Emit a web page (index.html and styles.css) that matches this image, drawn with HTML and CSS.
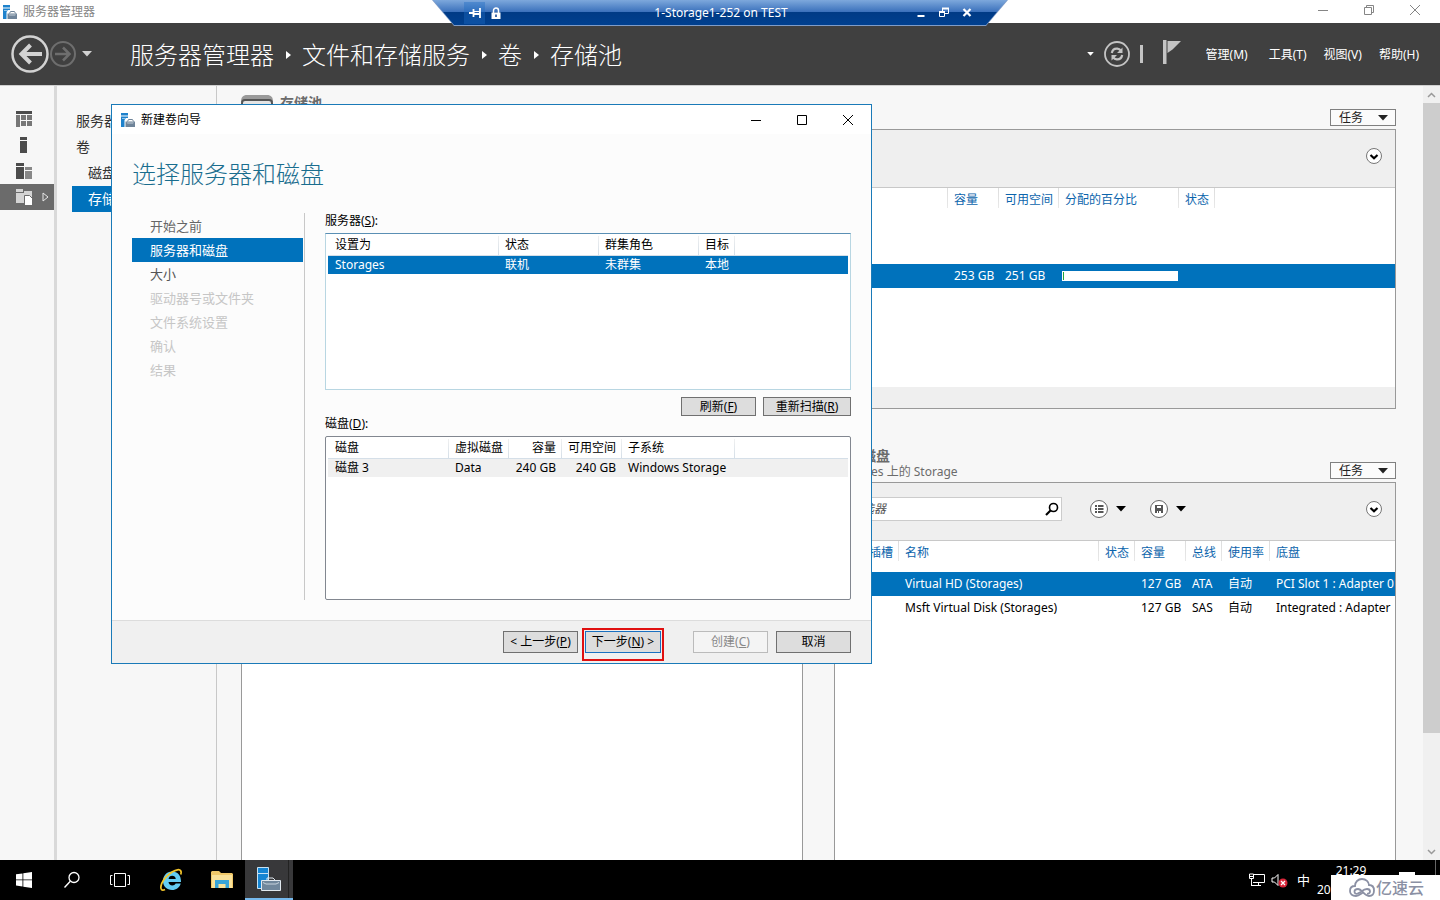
FILE: index.html
```html
<!DOCTYPE html>
<html lang="zh-CN">
<head>
<meta charset="utf-8">
<title>服务器管理器</title>
<link rel="stylesheet" href="styles.css">
</head>
<body>
<svg class="defs" width="0" height="0" aria-hidden="true">
  <symbol id="i-server" viewBox="0 0 14 14">
    <path fill="#1e82cc" d="M0 0h7v2.500H0zM0 3.500h7V5H5L3.500 7v7H0z"/>
    <path fill="#8fc4ea" d="M1 5h4v1H1z"/>
    <path fill="none" stroke="#6f8499" d="M6.500 8.500l1-2h4l1 2"/>
    <path fill="#6f8499" d="M4.500 8.500h9.500V14H4.500z"/>
    <path fill="#c3ced8" d="M5.500 9.500h7.500l-1 1H6.500z"/>
  </symbol>
  <symbol id="i-chev" viewBox="0 0 18 18">
    <circle cx="9" cy="9" r="7.500" fill="#fff" stroke="#777"/>
    <path d="M5.500 8L9 11.200 12.500 8" fill="none" stroke="#000" stroke-width="2.200"/>
  </symbol>
  <symbol id="i-caret" viewBox="0 0 10 6"><path d="M0 0h10L5 5.500z" fill="currentColor"/></symbol>
  <symbol id="i-min" viewBox="0 0 12 12"><path d="M1 6.500h10" stroke="currentColor" fill="none"/></symbol>
  <symbol id="i-close" viewBox="0 0 12 12"><path d="M1 1l10 10M11 1L1 11" stroke="currentColor" fill="none"/></symbol>
  <symbol id="i-restore" viewBox="0 0 12 12"><path d="M1.500 3.500h7v7h-7zM3.500 3.500v-2h7v7h-2" stroke="currentColor" fill="none"/></symbol>
</svg>

<div class="screen">
  <header class="titlebar">
    <svg class="app-icon" width="14" height="14"><use href="#i-server"/></svg>
    <span class="app-title">服务器管理器</span>
    <div class="win-controls">
      <button aria-label="最小化"><svg width="12" height="12"><use href="#i-min"/></svg></button>
      <button aria-label="还原"><svg width="12" height="12"><use href="#i-restore"/></svg></button>
      <button aria-label="关闭"><svg width="12" height="12"><use href="#i-close"/></svg></button>
    </div>
  </header>

  <div class="remote-bar">
    <div class="remote-inner">
      <div class="remote-left">
        <button class="pin" aria-label="固定"><svg width="12" height="12" viewBox="0 0 12 12"><path d="M0 6h4M4.500 2v8M11 1v10" stroke="#fff" stroke-width="1.800" fill="none"/><path d="M5 4h6v4H5z" fill="#fff"/><path d="M5.500 5.500H10" stroke="#2a63b0"/></svg></button>
        <button aria-label="锁定"><svg width="10" height="12" viewBox="0 0 10 12"><path d="M2.500 6V3.500a2.500 2.500 0 0 1 5 0V6" fill="none" stroke="#fff" stroke-width="1.500"/><path d="M.5 5.500h9V12h-9z" fill="#fff"/><path d="M5 7.500v2.500" stroke="#0a3f90" stroke-width="1.500"/></svg></button>
      </div>
      <span class="remote-title">1-Storage1-252 on TEST</span>
      <div class="remote-right">
        <button aria-label="最小化"><svg width="12" height="12" viewBox="0 0 12 12"><path d="M2.500 9h7" stroke="#fff" stroke-width="2"/></svg></button>
        <button aria-label="还原"><svg width="12" height="12" viewBox="0 0 12 12"><path d="M1.500 5.500h5v4h-5zM4.500 5V1.500h6v5H7" fill="none" stroke="#fff"/><path d="M1 5h6M4 1.500h7" stroke="#fff" stroke-width="2"/></svg></button>
        <button aria-label="关闭"><svg width="12" height="12" viewBox="0 0 12 12"><path d="M2.500 2l7 7M9.500 2l-7 7" stroke="#fff" stroke-width="2.200"/></svg></button>
      </div>
    </div>
  </div>

  <nav class="navbar">
    <div class="history">
      <button aria-label="后退"><svg width="38" height="38" viewBox="0 0 38 38"><circle cx="19" cy="19" r="17.500" fill="none" stroke="#d2d2d2" stroke-width="2.500"/><path d="M31 19H11M19.500 10l-9 9 9 9" fill="none" stroke="#d2d2d2" stroke-width="4"/></svg></button>
      <button aria-label="前进"><svg width="28" height="28" viewBox="0 0 28 28"><circle cx="14" cy="14" r="12" fill="none" stroke="#6e6e6e" stroke-width="2"/><path d="M6 14h14M14 7.500l6.500 6.500-6.500 6.500" fill="none" stroke="#6e6e6e" stroke-width="2.500"/></svg></button>
      <button class="drop" aria-label="历史"><svg width="10" height="6"><use href="#i-caret"/></svg></button>
    </div>
    <div class="crumbs">
      <a href="#">服务器管理器</a><i></i><a href="#">文件和存储服务</a><i></i><a href="#">卷</a><i></i><a href="#">存储池</a>
    </div>
    <div class="nav-tools">
      <button aria-label="更多"><svg width="7" height="4"><use href="#i-caret"/></svg></button>
      <button aria-label="刷新"><svg width="28" height="28" viewBox="0 0 28 28"><circle cx="14" cy="14" r="12" fill="none" stroke="#c4c4c4" stroke-width="1.800"/><path d="M8.800 13c.6-3 3-4.500 5.500-4.300 1.600.1 2.700.8 3.700 2M19.200 15c-.6 3-3 4.500-5.500 4.300-1.600-.1-2.700-.8-3.700-2" fill="none" stroke="#c4c4c4" stroke-width="2.200"/><path d="M19.500 7.500v5.500H14zM8.500 20.500V15H14z" fill="#c4c4c4"/></svg></button>
      <span class="vbar"></span>
      <button class="flag" aria-label="通知"><svg width="18" height="24" viewBox="0 0 18 24"><path d="M0 0h3.500v24H0zM4.500 1H18L9.500 9.500 4.500 13z" fill="#c4c4c4"/></svg></button>
    </div>
    <div class="menus">
      <button>管理(M)</button><button>工具(T)</button><button>视图(V)</button><button>帮助(H)</button>
    </div>
  </nav>

  <div class="workspace">
    <nav class="rail">
      <button aria-label="仪表板"><svg width="16" height="16" viewBox="0 0 16 16"><path fill="#4c4c4c" d="M0 0h16v3H0z"/><path fill="#777" d="M0 4h4v12H0zM5 4h5v5H5zM11 4h5v5h-5zM5 10h5v5H5zM11 10h5v5h-5z"/></svg></button>
      <button aria-label="本地服务器"><svg width="16" height="16" viewBox="0 0 16 16"><path fill="#4c4c4c" d="M4 0h7v3H4zM4 4h7v12H4z"/></svg></button>
      <button aria-label="所有服务器"><svg width="16" height="16" viewBox="0 0 16 16"><path fill="#4c4c4c" d="M0 0h8v3H0zM0 4h8v12H0z"/><path fill="#888" d="M9 4h7v3H9zM9 8h7v8H9z"/></svg></button>
      <button class="on" aria-label="文件和存储服务"><svg width="16" height="16" viewBox="0 0 16 16"><path fill="#d4d4d4" d="M0 0h7v3H0zM0 4h8V2h8v12H0z"/><path fill="#fff" stroke="#6b6b6b" d="M8.500 6.500h5l3 3v7h-8z"/></svg><svg class="arrow" width="7" height="10" viewBox="0 0 7 10"><path d="M1 1v8l5-4z" fill="none" stroke="#e8e8e8"/></svg></button>
    </nav>
    <nav class="side">
      <a href="#">服务器</a>
      <a href="#">卷</a>
      <a class="sub" href="#">磁盘</a>
      <a class="sub on" href="#">存储池</a>
    </nav>

    <main class="content">
      <section class="pools">
        <div class="tile-head">
          <div class="pool-title">
            <svg width="32" height="26" viewBox="0 0 32 26"><path d="M0 8C0 3 2 1 6 1h20c4 0 6 2 6 7z" fill="#9a9a9a"/><rect x="1" y="6" width="30" height="19" rx="3" fill="#e4e4e4" stroke="#555" stroke-width="2"/></svg>
            <h2>存储池</h2>
          </div>
          <button class="task">任务<svg width="10" height="6"><use href="#i-caret"/></svg></button>
        </div>
        <div class="tile pool-tile">
          <div class="toolbar"><button class="chev" aria-label="展开"><svg width="18" height="18"><use href="#i-chev"/></svg></button></div>
          <table class="grid pool-grid">
            <colgroup><col class="w-lead"><col class="w51"><col class="w60"><col class="w120"><col class="w36"><col></colgroup>
            <thead><tr><th></th><th>容量</th><th>可用空间</th><th>分配的百分比</th><th>状态</th><th></th></tr></thead>
            <tbody><tr class="spacer"><td colspan="6"></td></tr>
            <tr class="sel"><td></td><td>253 GB</td><td>251 GB</td><td class="meter-cell"><div class="meter"><span></span></div></td><td></td><td></td></tr></tbody>
          </table>
          <div class="tile-foot"></div>
        </div>
      </section>

      <div class="lower">
        <section class="lower-col">
          <div class="tile-head tall"></div>
          <div class="tile fill"></div>
        </section>
        <section class="lower-col">
          <div class="tile-head tall">
            <div><h2>物理磁盘</h2><p>Storages 上的 Storage</p></div>
            <button class="task">任务<svg width="10" height="6"><use href="#i-caret"/></svg></button>
          </div>
          <div class="tile fill">
            <div class="toolbar">
              <label class="search"><input type="text" placeholder="筛选器" aria-label="筛选器"><svg width="14" height="14" viewBox="0 0 14 14"><circle cx="8.500" cy="5.500" r="4" fill="none" stroke="#000" stroke-width="1.600"/><path d="M5.500 8.500L1 13" stroke="#000" stroke-width="2.200"/></svg></label>
              <button class="tool" aria-label="筛选条件"><svg width="20" height="20" viewBox="0 0 20 20"><circle cx="10" cy="10" r="8.500" fill="#fff" stroke="#666"/><path d="M6 7h2M9 7h5.500M6 10h2M9 10h5.500M6 13h2M9 13h5.500" stroke="#555" stroke-width="1.800"/></svg><svg width="10" height="6"><use href="#i-caret"/></svg></button>
              <button class="tool" aria-label="保存查询"><svg width="20" height="20" viewBox="0 0 20 20"><circle cx="10" cy="10" r="8.500" fill="#fff" stroke="#666"/><path d="M6 6h8v8H6z" fill="#555"/><path d="M8 7h4v2H8zM8 12h1v2H8zM10 12h2v2h-2z" fill="#fff"/></svg><svg width="10" height="6"><use href="#i-caret"/></svg></button>
              <button class="chev" aria-label="展开"><svg width="18" height="18"><use href="#i-chev"/></svg></button>
            </div>
            <table class="grid disk-grid">
              <colgroup><col class="w28"><col class="w36"><col class="w200"><col class="w36"><col class="w51"><col class="w36"><col class="w48"><col></colgroup>
              <thead><tr><th></th><th class="slot">插槽</th><th>名称</th><th>状态</th><th>容量</th><th>总线</th><th>使用率</th><th>底盘</th></tr></thead>
              <tbody>
                <tr class="gap"><td colspan="8"></td></tr>
                <tr class="sel"><td></td><td></td><td>Virtual HD (Storages)</td><td></td><td>127 GB</td><td>ATA</td><td>自动</td><td>PCI Slot 1 : Adapter 0</td></tr>
                <tr><td></td><td></td><td>Msft Virtual Disk (Storages)</td><td></td><td>127 GB</td><td>SAS</td><td>自动</td><td>Integrated : Adapter</td></tr>
              </tbody>
            </table>
          </div>
        </section>
      </div>
    </main>

    <div class="scroll" aria-hidden="true">
      <svg width="9" height="6" viewBox="0 0 9 6"><path d="M1 5l3.500-3.500L8 5" fill="none" stroke="#999" stroke-width="1.500"/></svg>
      <div class="thumb"></div>
      <svg class="down" width="9" height="6" viewBox="0 0 9 6"><path d="M1 1l3.500 3.500L8 1" fill="none" stroke="#999" stroke-width="1.500"/></svg>
    </div>
  </div>

  <div class="wizard" role="dialog" aria-label="新建卷向导">
    <div class="wiz-title">
      <svg width="14" height="14"><use href="#i-server"/></svg>
      <span>新建卷向导</span>
      <div class="win-controls">
        <button aria-label="最小化"><svg width="12" height="12"><use href="#i-min"/></svg></button>
        <button aria-label="最大化"><svg width="12" height="12" viewBox="0 0 12 12"><path d="M1.500 1.500h9v9h-9z" fill="none" stroke="currentColor"/></svg></button>
        <button aria-label="关闭"><svg width="12" height="12"><use href="#i-close"/></svg></button>
      </div>
    </div>
    <div class="wiz-body">
      <h1>选择服务器和磁盘</h1>
      <div class="wiz-main">
        <ol class="steps">
          <li class="done">开始之前</li>
          <li class="on">服务器和磁盘</li>
          <li>大小</li>
          <li class="off">驱动器号或文件夹</li>
          <li class="off">文件系统设置</li>
          <li class="off">确认</li>
          <li class="off">结果</li>
        </ol>
        <div class="fields">
          <p class="label" id="l-srv">服务器(<u>S</u>):</p>
          <div class="list servers">
            <table aria-labelledby="l-srv">
              <colgroup><col class="w171"><col class="w100"><col class="w100"><col class="w36"><col></colgroup>
              <thead><tr><th>设置为</th><th>状态</th><th>群集角色</th><th>目标</th><th></th></tr></thead>
              <tbody><tr class="sel"><td>Storages</td><td>联机</td><td>未群集</td><td>本地</td><td></td></tr></tbody>
            </table>
          </div>
          <div class="list-actions">
            <button class="btn">刷新(<u>F</u>)</button><button class="btn wide">重新扫描(<u>R</u>)</button>
          </div>
          <p class="label" id="l-disk">磁盘(<u>D</u>):</p>
          <div class="list disks">
            <table aria-labelledby="l-disk">
              <colgroup><col class="w121"><col class="w60"><col class="w53"><col class="w60"><col class="w113"><col></colgroup>
              <thead><tr><th>磁盘</th><th>虚拟磁盘</th><th class="num">容量</th><th class="num">可用空间</th><th>子系统</th><th></th></tr></thead>
              <tbody><tr class="hover"><td>磁盘 3</td><td>Data</td><td class="num">240 GB</td><td class="num">240 GB</td><td>Windows Storage</td><td></td></tr></tbody>
            </table>
          </div>
        </div>
      </div>
    </div>
    <div class="wiz-foot">
      <button class="btn">&lt; 上一步(<u>P</u>)</button>
      <span class="mark"><button class="btn primary">下一步(<u>N</u>) &gt;</button></span>
      <button class="btn create" disabled>创建(<u>C</u>)</button>
      <button class="btn">取消</button>
    </div>
  </div>

  <footer class="taskbar">
    <button aria-label="开始"><svg width="16" height="16" viewBox="0 0 16 16"><path fill="#fff" d="M0 2.300L6.500 1.400v6.100H0zM7.300 1.300L16 0v7.500H7.300zM0 8.300h6.500v6.200L0 13.600zM7.300 8.300H16V16l-8.700-1.300z"/></svg></button>
    <button aria-label="搜索"><svg width="18" height="18" viewBox="0 0 18 18"><circle cx="11" cy="6.500" r="5" fill="none" stroke="#fff" stroke-width="1.300"/><path d="M7.300 10.200L1.500 16.500" stroke="#fff" stroke-width="1.400"/></svg></button>
    <button aria-label="任务视图"><svg width="20" height="14" viewBox="0 0 20 14"><path d="M4.500.5h11v13h-11zM2.500 2.500h-2v9h2M17.500 2.500h2v9h-2" fill="none" stroke="#fff"/></svg></button>
    <button class="ie" aria-label="Internet Explorer"><svg width="24" height="24" viewBox="0 0 24 24"><path fill="#63cdf3" fill-rule="evenodd" d="M13 3.500c5.500 0 9.200 4 9 10.500H9.500c.3 2.300 1.800 3.500 3.800 3.500 1.600 0 2.700-.7 3.400-2h5c-1 4-4.400 6.500-8.600 6.500C7.800 22 4 18.300 4 13s3.800-9.500 9-9.500zM9.600 11h7.200c-.3-2-1.700-3.200-3.600-3.200S9.900 9 9.600 11z"/><path d="M21.800 6.500C23 3.500 21.500 1.300 18.500 1.800 12 3 3.500 11 2 18c-.8 3.500.8 5 4 3.500" fill="none" stroke="#f3c52b" stroke-width="1.800"/></svg></button>
    <button aria-label="文件资源管理器"><svg width="22" height="20" viewBox="0 0 22 20"><path d="M0 2l1-1h7l2 2h11l1 1v14H0z" fill="#f0c869"/><path d="M1 5h20v13H1z" fill="#fae29a"/><path d="M4 18v-8h14v8h-3.500v-4h-7v4z" fill="#39a5d8"/></svg></button>
    <button class="active" aria-label="服务器管理器"><svg width="26" height="26" viewBox="0 0 26 26"><path d="M1.500 1.500h11v6h-11zM1.500 7.500h11v7h-6v8h-5z" fill="#1585d3" stroke="#c8e2f4"/><path d="M11 14v-2h6l2 2" fill="none" stroke="#dfe7ee"/><path d="M5.500 14.500h19v10h-19z" fill="#70879c" stroke="#e1e8ee"/><path d="M7 16.500l3 1.500h10l3-1.500" fill="none" stroke="#c7d3dd"/></svg></button>
    <div class="tray">
      <svg width="17" height="14" viewBox="0 0 17 14"><path d="M5 1.500h11.500v8H5M1.500 1v4.500h4V1zM3.500 5.500v7M3 12.500h10M10.500 9.500v3M2 3.500h3" fill="none" stroke="#fff"/></svg>
      <svg width="17" height="15" viewBox="0 0 17 15"><path d="M1 5h2.500L7 1.500v11L3.500 9H1z" fill="none" stroke="#fff"/><circle cx="12" cy="10" r="4.500" fill="#d9263a"/><path d="M10 8l4 4M14 8l-4 4" stroke="#fff" stroke-width="1.300"/></svg>
      <span class="ime">中</span>
      <div class="clock"><time>21:29</time><span>20</span></div>
      <i class="show-desktop"></i>
    </div>
    <div class="watermark">
      <svg width="26" height="20" viewBox="0 0 26 20"><path d="M7 18C3 18 1 16 1 13s2-5 5-5c0-4 3-7 7-7s7 3 7 6c3 0 5 2 5 5.500S23 18 20 18c-5 0-7-7-11-7-2 0-3.500 1-3.500 2.700S7 16 8.500 15.700c3.500-.7 5-4.700 9.500-4.700 2 0 3 1 3 2.500S19.500 16 18 15.500" fill="none" stroke="#8b90a4" stroke-width="1.800"/><path d="M7 18c3 0 5-2.500 7-3.500" fill="none" stroke="#8b90a4" stroke-width="1.800"/></svg>
      <span>亿速云</span>
    </div>
  </footer>
</div>
</body>
</html>
```
FILE: styles.css
```css
* { box-sizing: border-box; }

body {
  margin: 0;
  font: 12px/16px "Noto Sans", "Noto Sans CJK SC", sans-serif;
  color: #000;
}

button {
  margin: 0;
  padding: 0;
  border: 0;
  background: none;
  color: inherit;
  font: inherit;
  white-space: nowrap;
}

a { color: inherit; text-decoration: none; }
h1, h2, p, ol { margin: 0; padding: 0; }
ol { list-style: none; }
svg { display: block; flex: none; }
.defs { position: absolute; }
table { width: 100%; table-layout: fixed; border-collapse: collapse; }
th, td { padding: 0; font-weight: 400; text-align: left; white-space: nowrap; }

.screen {
  position: relative;
  display: flex;
  flex-direction: column;
  height: 100vh;
  overflow: hidden;
  background: #f7f7f7;
}

/* Window title bar */
.titlebar {
  display: flex;
  align-items: center;
  flex: none;
  height: 23px;
  padding-left: 3px;
  background: #fff;
  color: #858585;
}
.app-title { margin-left: 6px; }
.win-controls { display: flex; margin-left: auto; }
.win-controls button { display: grid; place-items: center; width: 46px; height: 20px; }
.titlebar .win-controls { margin-right: 2px; align-self: flex-start; }

/* Remote session bar */
.remote-bar {
  position: absolute;
  z-index: 5;
  top: 0;
  left: 50%;
  width: 576px;
  height: 26px;
  transform: translateX(-50%);
  background: #7f9cc8;
  clip-path: polygon(0 0, 100% 0, 554px 100%, 22px 100%);
}
.remote-inner {
  display: grid;
  grid-template-columns: 1fr auto 1fr;
  align-items: center;
  height: 25px;
  padding: 0 30px 0 32px;
  background: linear-gradient(#7da8dc 0, #3a70bb 12px, #003a85 12px, #00408f 100%);
  clip-path: polygon(1px 0, 575px 0, 554px 100%, 22px 100%);
  color: #fff;
}
.remote-left, .remote-right { display: flex; }
.remote-left button { display: grid; place-items: center; width: 21px; height: 22px; }
.remote-left .pin { background: #1e6cc466; }
.remote-right { justify-content: flex-end; }
.remote-right button { display: grid; place-items: center; width: 23px; height: 24px; }

/* Navigation bar */
.navbar {
  display: flex;
  align-items: center;
  flex: none;
  height: 62px;
  padding: 0 21px 0 11px;
  background: #404040;
  color: #fff;
}
.history { display: flex; align-items: center; width: 119px; }
.history .drop { margin-left: 5px; color: #d2d2d2; }
.crumbs { display: flex; align-items: center; padding-top: 2px; font-size: 24px; line-height: 32px; font-weight: 300; }
.crumbs i {
  width: 5px;
  height: 8px;
  margin: 0 11px 0 12px;
  background: #fff;
  clip-path: polygon(0 0, 100% 50%, 0 100%);
}
.nav-tools { display: flex; align-items: center; margin-left: auto; }
.nav-tools svg { color: #fff; }
.nav-tools button:nth-child(2) { margin-left: 9px; }
.nav-tools .flag { padding-bottom: 4px; }
.vbar { width: 3px; height: 18px; margin: 0 20px 0 9px; background: #c4c4c4; }
.menus { display: flex; gap: 17px; margin-left: 25px; padding-top: 2px; }
.menus button:first-child { margin-right: 4px; }

/* Workspace */
.workspace { display: flex; flex: 1; min-height: 0; border-top: 1px solid #d0d0d0; }
.rail { width: 57px; padding-top: 20px; border-right: 3px solid #d9d9d9; flex: none; }
.rail button { display: flex; align-items: center; width: 100%; height: 26px; padding-left: 16px; }
.rail .on { background: #6b6b6b; }
.rail .arrow { margin-left: 10px; }
.side { width: 160px; padding: 22px 0 0 15px; border-right: 1px solid #c8c8c8; flex: none; font-size: 14px; line-height: 26px; color: #333; }
.side a { display: block; padding-left: 4px; }
.side .sub { padding-left: 16px; }
.side .on { background: #0072bc; color: #fff; }

.content { display: flex; flex-direction: column; flex: 1; min-width: 0; padding: 0 27px 0 24px; }
.tile-head { display: flex; align-items: flex-end; justify-content: space-between; height: 43px; padding-bottom: 3px; color: #6b6b6b; }
.tile-head.tall { height: 73px; }
.tile-head h2 { font-size: 14px; line-height: 18px; font-weight: 700; }
.tall p { line-height: 14px; }
.pool-title { display: flex; gap: 7px; align-self: flex-start; padding-top: 8px; }
.task {
  display: flex;
  align-items: center;
  justify-content: space-between;
  width: 66px;
  height: 17px;
  padding: 0 7px 0 8px;
  border: 1px solid #808080;
  background: #fbfbfb;
  color: #222;
  line-height: 15px;
}
.tile { border: 1px solid #999; background: #fff; overflow: hidden; }
.pool-tile { display: flex; flex-direction: column; height: 280px; }
.tile-foot { height: 21px; margin-top: auto; background: #efefef; }
.toolbar { display: flex; align-items: center; height: 58px; flex: none; padding: 0 12px 6px 13px; border-bottom: 1px solid #c8c8c8; background: #efefef; }
.chev { margin-left: auto; }
.search { display: flex; align-items: center; width: 214px; height: 24px; padding: 0 2px 0 1px; border: 1px solid #ccc; background: #fff; }
.search input { flex: 1; min-width: 0; padding: 0; border: 0; outline: 0; font: italic 12px/16px "Noto Sans", "Noto Sans CJK SC", sans-serif; }
.search input::placeholder { color: #555; opacity: 1; }
.tool { display: flex; align-items: center; gap: 7px; margin-left: 23px; }
.search + .tool { margin-left: 27px; }

.grid th { height: 24px; padding-left: 6px; color: #0b64ac; background: linear-gradient(#ddd, #e8e8e8) right top / 1px 20px no-repeat; }
.grid th:last-child { background: none; }
.grid td { height: 24px; padding-left: 6px; }
.grid .spacer td { height: 52px; }
.grid .gap td { height: 7px; }
.sel { background: #0072bc; color: #fff; }
.grid .meter-cell { padding: 0 1px 0 3px; }
.meter { height: 10px; padding: 1px; background: #fff; }
.meter span { display: block; width: 1px; height: 8px; background: #22a53a; }

.lower { display: grid; grid-template-columns: 1fr 1fr; gap: 31px; flex: 1; min-height: 0; }
.lower-col { display: flex; flex-direction: column; min-width: 0; }
.fill { flex: 1; border-bottom: 0; }

.scroll { display: flex; flex-direction: column; align-items: center; width: 17px; flex: none; padding-top: 6px; background: #f0f0f0; }
.thumb { width: 100%; height: 82%; margin-top: 5px; background: #cdcdcd; }
.down { margin: auto 0 5px; }

/* Column widths */
.w-lead { width: 706px; }
.w28 { width: 28px; }
.w36 { width: 36px; }
.w48 { width: 48px; }
.w51 { width: 51px; }
.w53 { width: 53px; }
.w60 { width: 60px; }
.w100 { width: 100px; }
.w113 { width: 113px; }
.w120 { width: 120px; }
.w121 { width: 121px; }
.w171 { width: 171px; }
.w200 { width: 200px; }

/* Wizard window */
.wizard {
  position: absolute;
  z-index: 3;
  top: 104px;
  left: 111px;
  display: flex;
  flex-direction: column;
  width: 761px;
  border: 1px solid #1a7ab8;
  background: #fcfcfc;
}
.wiz-title { display: flex; align-items: center; height: 29px; padding-left: 9px; background: #fff; }
.wiz-title span { margin-left: 6px; }
.wiz-body { padding: 24px 20px 20px; }
h1 { font-size: 24px; line-height: 32px; font-weight: 300; color: #1a6d8e; }
.wiz-main { display: flex; gap: 20px; padding-top: 23px; }
.steps { width: 173px; flex: none; padding: 1px 1px 0 0; border-right: 1px solid #c8c8c8; font-size: 13px; line-height: 24px; color: #555; }
.steps li { padding-left: 18px; }
.steps .done { color: #666; }
.steps .on { background: #0072bc; color: #fff; }
.steps .off { color: #c6c6c6; }
.fields { flex: 1; min-width: 0; }
.label { line-height: 16px; }
.list { padding: 2px; border: 1px solid #828790; background: #fff; }
.servers { height: 157px; margin-top: 4px; border-color: #5a8fb4 #b8d6e2 #b8d6e2; }
.disks { height: 164px; margin-top: 4px; border-radius: 2px; }
.list th { height: 19px; padding-left: 6px; line-height: 16px; border-bottom: 1px solid #d5dfe8; background: linear-gradient(#f0f0f0, #d5dfe8) right top / 1px 100% no-repeat; }
.list th:last-child { background: none; }
.list td { height: 19px; padding-left: 6px; line-height: 16px; }
.list th:first-child, .list td:first-child { padding-left: 7px; }
.list .num { padding: 0 6px 0 0; text-align: right; }
.hover { background: #f0f0f0; }
.list-actions { display: flex; justify-content: flex-end; gap: 7px; padding: 7px 0 0; }
.btn { width: 75px; height: 22px; border: 1px solid #707070; background: #ddd; line-height: 18px; }
.list-actions .btn { height: 19px; line-height: 16px; }
.list-actions .wide { width: 88px; }
.wiz-foot { display: flex; align-items: flex-start; justify-content: flex-end; height: 43px; padding: 7px 20px 0; border-top: 1px solid #dcdcdc; background: #f0f0f0; }
.wiz-foot > .btn { margin-top: 3px; }
.mark { height: 33px; margin: 0 29px 0 4px; padding: 1px; border: 2px solid #e01010; }
.primary { width: 76px; border: 1px solid #1a70c0; }
.create { margin-right: 8px; border-color: #bbb; background: #f4f4f4; color: #888; }

/* Taskbar */
.taskbar { position: relative; display: flex; flex: none; height: 40px; background: #000; color: #fff; }
.taskbar > button { display: grid; place-items: center; width: 48px; height: 40px; }
.taskbar > .ie { width: 54px; }
.taskbar > button:nth-child(5) { width: 47px; }
.taskbar > .active { background: linear-gradient(90deg, transparent 43px, #222 43px, #222 44px, transparent 44px) #38383a; border-bottom: 2px solid #76b9ed; }
.tray { display: flex; align-items: center; margin-left: auto; }
.tray svg + svg { margin-left: 6px; }
.ime { margin-left: 9px; font-size: 13px; }
.clock { display: flex; flex-direction: column; width: 68px; margin-left: 7px; line-height: 19px; }
.clock time { text-align: center; }
.show-desktop { align-self: stretch; width: 1px; margin: 0 4px 0 50px; background: #666; }
.watermark {
  position: absolute;
  right: 0;
  bottom: 0;
  display: flex;
  align-items: center;
  gap: 1px;
  width: 109px;
  height: 25px;
  padding-left: 18px;
  background: #fff;
  color: #8b90a4;
  font-size: 16px;
  font-weight: 500;
}
.watermark::before { content: ""; position: absolute; top: -3px; right: 25px; width: 16px; height: 3px; background: #fff; }
```
